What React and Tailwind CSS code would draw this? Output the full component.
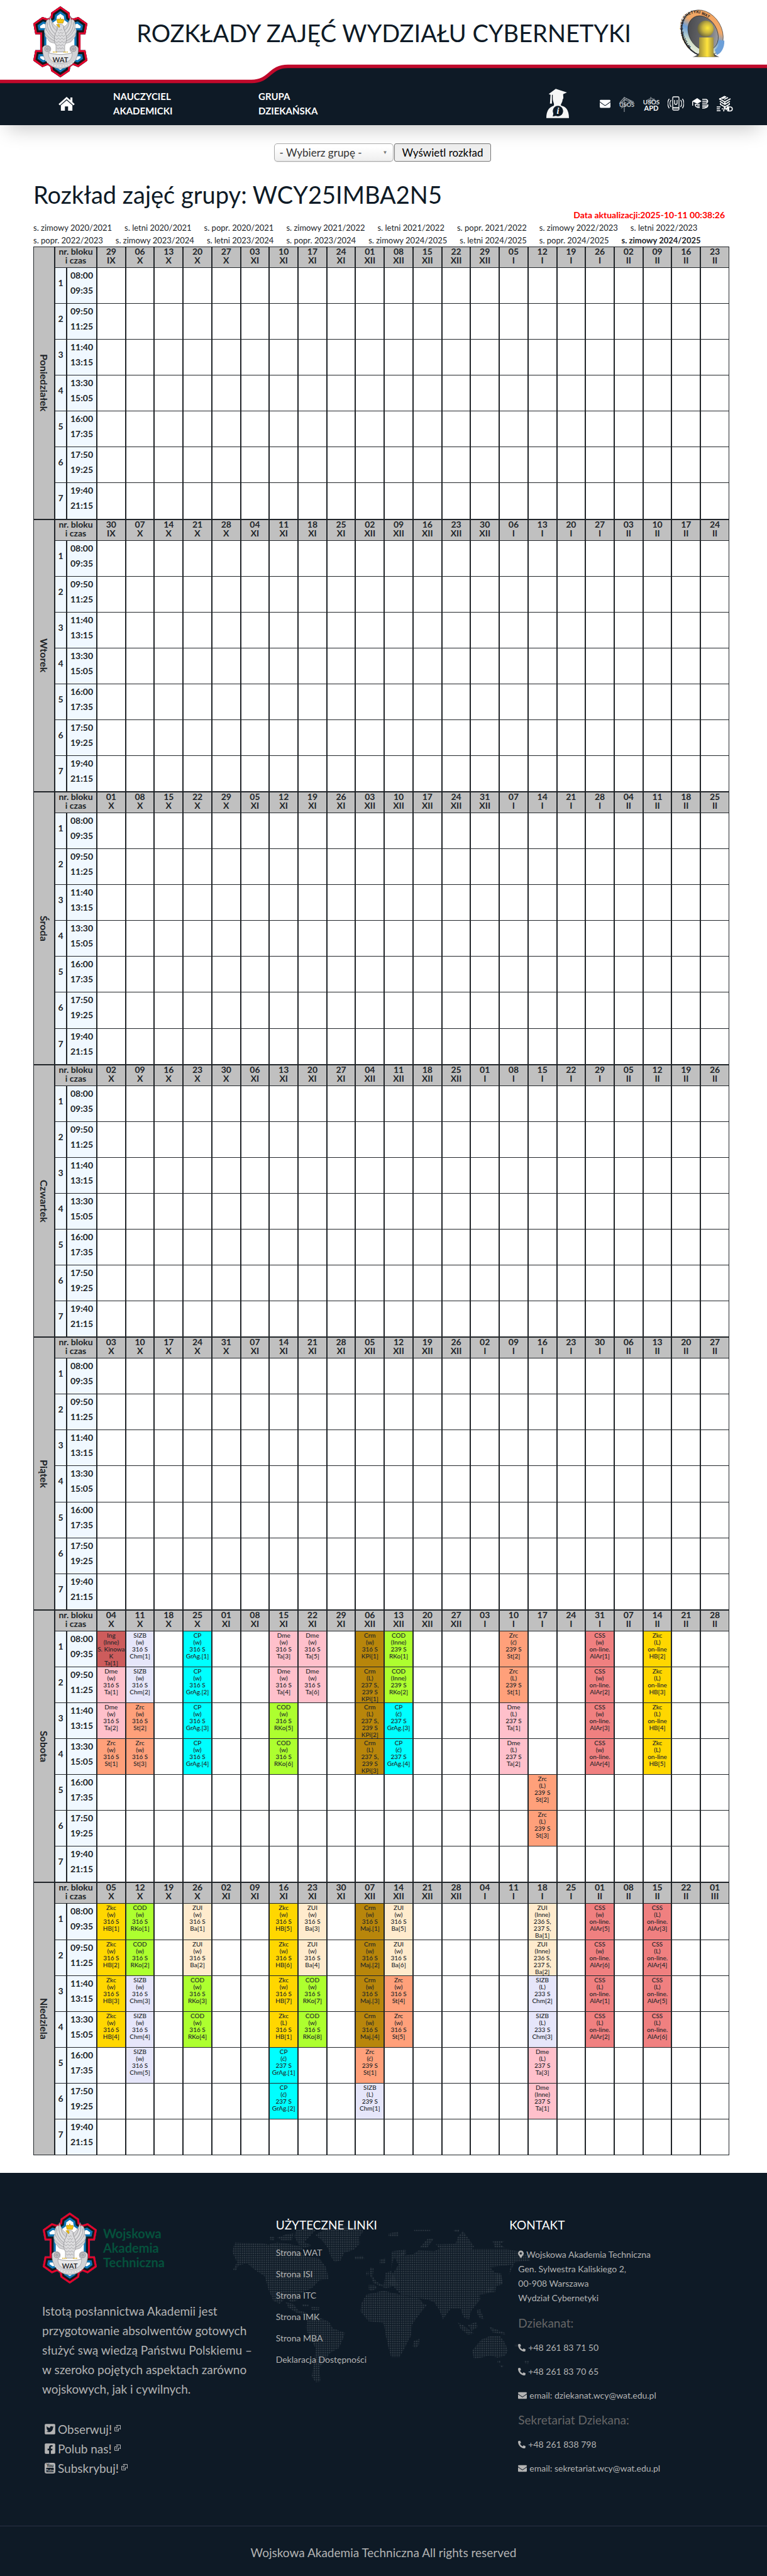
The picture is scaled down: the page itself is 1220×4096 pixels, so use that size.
import React from "react";
import { FaEnvelope, FaFacebookSquare, FaMapMarkerAlt, FaPhoneAlt, FaTwitterSquare } from "react-icons/fa";

const COLORS = {
  Ing: "bg-[#cd5c5c]",
  SIZB: "bg-[#e6e6fa]",
  CP: "bg-[#00ffff]",
  Dme: "bg-[#ffc0cb]",
  Crm: "bg-[#b8860b]",
  COD: "bg-[#adff2f]",
  Zrc: "bg-[#ffa07a]",
  CSS: "bg-[#f08080]",
  Zkc: "bg-[#ffd700]",
  ZUI: "bg-[#ffebcd]",
};

const BLOCKS = [
  ["08:00", "09:35"],
  ["09:50", "11:25"],
  ["11:40", "13:15"],
  ["13:30", "15:05"],
  ["16:00", "17:35"],
  ["17:50", "19:25"],
  ["19:40", "21:15"],
];

const DAYS = ["Poniedziałek", "Wtorek", "Środa", "Czwartek", "Piątek", "Sobota", "Niedziela"];
const ROMAN = ["I", "II", "III", "IV", "V", "VI", "VII", "VIII", "IX", "X", "XI", "XII"];
const WEEKS = Array.from({ length: 22 }, (_, i) => i);

// Lessons by day, then by block; the key of each lesson is its week column.
const LESSONS = {
  5: [
    {
      0: "Ing|(Inne)|S. Kinowa|K|Ta[1]", 1: "SIZB|(w)|316 S|Chm[1]", 3: "CP|(w)|316 S|GrAg.[1]",
      6: "Dme|(w)|316 S|Ta[3]", 7: "Dme|(w)|316 S|Ta[5]", 9: "Crm|(w)|316 S|KPi[1]",
      10: "COD|(Inne)|239 S|RKo[1]", 14: "Zrc|(ć)|239 S|St[2]", 17: "CSS|(w)|on-line.|AlAr[1]", 19: "Zkc|(L)|on-line|HB[2]",
    },
    {
      0: "Dme|(w)|316 S|Ta[1]", 1: "SIZB|(w)|316 S|Chm[2]", 3: "CP|(w)|316 S|GrAg.[2]",
      6: "Dme|(w)|316 S|Ta[4]", 7: "Dme|(w)|316 S|Ta[6]", 9: "Crm|(L)|237 S,|239 S|KPi[1]",
      10: "COD|(Inne)|239 S|RKo[2]", 14: "Zrc|(L)|239 S|St[1]", 17: "CSS|(w)|on-line.|AlAr[2]", 19: "Zkc|(L)|on-line|HB[3]",
    },
    {
      0: "Dme|(w)|316 S|Ta[2]", 1: "Zrc|(w)|316 S|St[2]", 3: "CP|(w)|316 S|GrAg.[3]",
      6: "COD|(w)|316 S|RKo[5]", 9: "Crm|(L)|237 S,|239 S|KPi[2]",
      10: "CP|(ć)|237 S|GrAg.[3]", 14: "Dme|(L)|237 S|Ta[1]", 17: "CSS|(w)|on-line.|AlAr[3]", 19: "Zkc|(L)|on-line|HB[4]",
    },
    {
      0: "Zrc|(w)|316 S|St[1]", 1: "Zrc|(w)|316 S|St[3]", 3: "CP|(w)|316 S|GrAg.[4]",
      6: "COD|(w)|316 S|RKo[6]", 9: "Crm|(L)|237 S,|239 S|KPi[3]",
      10: "CP|(ć)|237 S|GrAg.[4]", 14: "Dme|(L)|237 S|Ta[2]", 17: "CSS|(w)|on-line.|AlAr[4]", 19: "Zkc|(L)|on-line|HB[5]",
    },
    { 15: "Zrc|(L)|239 S|St[2]" },
    { 15: "Zrc|(L)|239 S|St[3]" },
    {},
  ],
  6: [
    {
      0: "Zkc|(w)|316 S|HB[1]", 1: "COD|(w)|316 S|RKo[1]", 3: "ZUI|(w)|316 S|Ba[1]",
      6: "Zkc|(w)|316 S|HB[5]", 7: "ZUI|(w)|316 S|Ba[3]", 9: "Crm|(w)|316 S|Maj.[1]",
      10: "ZUI|(w)|316 S|Ba[5]", 15: "ZUI|(Inne)|236 S,|237 S,|Ba[1]", 17: "CSS|(w)|on-line.|AlAr[5]", 19: "CSS|(L)|on-line.|AlAr[3]",
    },
    {
      0: "Zkc|(w)|316 S|HB[2]", 1: "COD|(w)|316 S|RKo[2]", 3: "ZUI|(w)|316 S|Ba[2]",
      6: "Zkc|(w)|316 S|HB[6]", 7: "ZUI|(w)|316 S|Ba[4]", 9: "Crm|(w)|316 S|Maj.[2]",
      10: "ZUI|(w)|316 S|Ba[6]", 15: "ZUI|(Inne)|236 S,|237 S,|Ba[2]", 17: "CSS|(w)|on-line.|AlAr[6]", 19: "CSS|(L)|on-line.|AlAr[4]",
    },
    {
      0: "Zkc|(w)|316 S|HB[3]", 1: "SIZB|(w)|316 S|Chm[3]", 3: "COD|(w)|316 S|RKo[3]",
      6: "Zkc|(w)|316 S|HB[7]", 7: "COD|(w)|316 S|RKo[7]", 9: "Crm|(w)|316 S|Maj.[3]",
      10: "Zrc|(w)|316 S|St[4]", 15: "SIZB|(L)|233 S|Chm[2]", 17: "CSS|(L)|on-line.|AlAr[1]", 19: "CSS|(L)|on-line.|AlAr[5]",
    },
    {
      0: "Zkc|(w)|316 S|HB[4]", 1: "SIZB|(w)|316 S|Chm[4]", 3: "COD|(w)|316 S|RKo[4]",
      6: "Zkc|(L)|316 S|HB[1]", 7: "COD|(w)|316 S|RKo[8]", 9: "Crm|(w)|316 S|Maj.[4]",
      10: "Zrc|(w)|316 S|St[5]", 15: "SIZB|(L)|233 S|Chm[3]", 17: "CSS|(L)|on-line.|AlAr[2]", 19: "CSS|(L)|on-line.|AlAr[6]",
    },
    { 1: "SIZB|(w)|316 S|Chm[5]", 6: "CP|(ć)|237 S|GrAg.[1]", 9: "Zrc|(ć)|239 S|St[1]", 15: "Dme|(L)|237 S|Ta[3]" },
    { 6: "CP|(ć)|237 S|GrAg.[2]", 9: "SIZB|(L)|239 S|Chm[1]", 15: "Dme|(Inne)|237 S|Ta[1]" },
    {},
  ],
};

const SEMESTERS = [
  ["s. zimowy 2020/2021", "s. letni 2020/2021", "s. popr. 2020/2021", "s. zimowy 2021/2022", "s. letni 2021/2022", "s. popr. 2021/2022", "s. zimowy 2022/2023", "s. letni 2022/2023"],
  ["s. popr. 2022/2023", "s. zimowy 2023/2024", "s. letni 2023/2024", "s. popr. 2023/2024", "s. zimowy 2024/2025", "s. letni 2024/2025", "s. popr. 2024/2025", "s. zimowy 2024/2025"],
];

function dateOf(day, week) {
  const d = new Date(Date.UTC(2025, 8, 29 + day + week * 7));
  return [String(d.getUTCDate()).padStart(2, "0"), ROMAN[d.getUTCMonth()]];
}

const BADGE =
  "184,15 230,47 233,68 247,78 275,69 321,102 311,157 286,157 286,237 311,237 321,290 275,323 247,312 234,322 231,343 184,375 137,343 134,322 121,312 93,323 47,290 57,237 82,237 82,157 57,157 47,102 93,69 121,78 135,68 138,47";

function WatCrest({ id, className }) {
  const wing = (
    <g>
      <path d="M166 118 C150 112 140 92 131 66 C130 84 131 92 127 82 C122 76 119 90 117 84 C108 98 108 112 110 122 C101 132 102 146 107 154 C104 168 114 178 122 182 C124 192 134 198 146 200 L172 204 Z" fill="#d4d4d6" stroke="#87878b" strokeWidth="2" />
      <path d="M128 88 C130 120 140 142 162 158 M117 96 C118 130 134 156 160 172 M110 124 C116 148 134 168 158 182 M108 156 C122 172 138 184 158 192 M140 96 C142 114 150 128 164 138" fill="none" stroke="#98989c" strokeWidth="2.5" />
      <path d="M122 110 C128 136 142 152 160 165 M112 140 C124 162 140 176 160 187 M134 100 C136 122 148 138 163 148" fill="none" stroke="#fff" strokeWidth="2" />
    </g>
  );
  return (
    <svg viewBox="44 12 280 366" className={className} role="img" aria-label="WAT">
      <clipPath id={id}><polygon points={BADGE} /></clipPath>
      <g clipPath={`url(#${id})`} strokeLinejoin="miter">
        <polygon points={BADGE} fill="#fff" stroke="#0c74b4" strokeWidth="62" />
        <polygon points={BADGE} fill="none" stroke="#15181c" strokeWidth="40" />
        <polygon points={BADGE} fill="none" stroke="#e4042c" strokeWidth="20" />
      </g>
      {wing}
      <g transform="translate(368 0) scale(-1 1)">{wing}</g>
      <path d="M170 112 C172 104 196 104 200 114 C200 128 204 136 210 150 C218 176 216 196 206 214 L206 246 L162 246 L162 214 C150 194 152 170 160 150 C168 136 172 128 170 112Z" fill="#dcdcde" stroke="#7c7c80" strokeWidth="2" />
      <path d="M160 160 l8 8 8-8 8 8 8-8 8 8 8-8 M156 176 l9 8 9-8 9 8 9-8 9 8 9-8 M158 192 l8 8 9-8 9 8 9-8 9 8 8-8 M162 208 l8 8 8-8 8 8 8-8 8 8 M166 224 l7 8 7-8 7 8 7-8 7 8 M172 146 l7 7 7-7 7 7 7-7 M176 132 l6 6 6-6 6 6" fill="none" stroke="#88888c" strokeWidth="2" />
      <path d="M176 104 L163 108 L172 116 L178 124 L182 116 Z" fill="#e8b80c" stroke="#8a6a08" strokeWidth="1" />
      <path d="M170 100 L166 82 C172 76 178 80 178 84 C178 76 190 76 190 84 C192 78 202 78 202 86 L197 101 Z" fill="#f2c412" stroke="#a37a08" strokeWidth="2" />
      <circle cx="184" cy="75" r="3.5" fill="#e8b80c" />
      <path d="M94 232 C90 214 118 206 132 220 C140 232 134 246 124 250 C150 262 220 262 244 250 C234 246 228 232 236 220 C250 206 280 214 275 238 C274 278 246 330 184 330 C126 330 92 278 94 232Z" fill="#d2d2d5" stroke="#77777b" strokeWidth="2" />
      <path d="M124 250 C150 262 220 262 244 250 C246 284 226 302 184 303 C144 302 122 284 124 250Z" fill="#e9e9eb" stroke="#8e8e92" strokeWidth="2" />
      <path d="M108 286 C124 308 150 317 184 318 C220 317 244 308 260 286" fill="none" stroke="#f5f5f5" strokeWidth="5" strokeDasharray="5 9" />
      <g fill="#c2c2c5" stroke="#808084" strokeWidth="2.5">
        <circle cx="118" cy="231" r="13" /><circle cx="250" cy="231" r="13" />
        <circle cx="118" cy="231" r="5" /><circle cx="250" cy="231" r="5" />
      </g>
      <path d="M146 247 h22 M200 247 h22" stroke="#d5a60c" strokeWidth="5" strokeDasharray="5 3" />
      <text x="184" y="298" textAnchor="middle" fontSize="36" className="fill-[#333336] font-['Lato',sans-serif] font-bold">WAT</text>
    </svg>
  );
}

function FacultyLogo({ className }) {
  return (
    <svg viewBox="76 8 230 248" className={className} role="img" aria-label="Wydział Cybernetyki WAT">
      <defs>
        <linearGradient id="ring" x1="0.1" y1="0.9" x2="0.9" y2="0.2">
          <stop offset="0" stopColor="#f0f4e4" /><stop offset="0.25" stopColor="#cfdcc8" />
          <stop offset="0.5" stopColor="#6c9fd8" /><stop offset="0.7" stopColor="#f0a868" /><stop offset="1" stopColor="#f4a460" />
        </linearGradient>
        <linearGradient id="disc" x1="0" y1="0" x2="1" y2="1">
          <stop offset="0" stopColor="#3f4044" /><stop offset="0.6" stopColor="#6d6e72" /><stop offset="1" stopColor="#b9babd" />
        </linearGradient>
        <linearGradient id="column">
          <stop offset="0" stopColor="#8c7d3c" /><stop offset="0.55" stopColor="#ffe43c" /><stop offset="1" stopColor="#84763c" />
        </linearGradient>
        <radialGradient id="ball" cx="0.62" cy="0.45" r="0.6">
          <stop offset="0" stopColor="#ffe838" /><stop offset="0.5" stopColor="#c8b440" /><stop offset="1" stopColor="#6b663f" />
        </radialGradient>
        <path id="ringText" d="M134 203 C84 150 78 70 122 42 C178 8 262 72 278 150 C284 180 280 204 268 222" />
      </defs>
      <g transform="rotate(-30 191 132)">
        <ellipse cx="187" cy="132" rx="99" ry="122" fill="#1e2227" />
        <ellipse cx="191" cy="132" rx="97" ry="121" fill="url(#ring)" stroke="#33363b" strokeWidth="2" />
        <ellipse cx="193" cy="134" rx="70" ry="92" fill="url(#disc)" stroke="#222" strokeWidth="2" />
      </g>
      <path d="M300 170 C302 208 282 236 262 242 L252 216 C266 206 276 190 274 168Z" fill="#6c9fd8" />
      <text fontSize="20" className="fill-[#1b1b1d] font-['Liberation_Sans',sans-serif] font-bold">
        <textPath href="#ringText">WYDZIAŁ CYBERNETYKI WAT</textPath>
      </text>
      <path d="M140 252 C158 248 172 240 176 226 H244 C248 240 262 248 276 252Z" fill="#4a4a48" />
      <path d="M174 154 H246 V230 C247 244 252 250 256 252 H164 C170 248 174 240 174 230Z" fill="url(#column)" />
      <circle cx="206" cy="111" r="41" fill="url(#ball)" />
    </svg>
  );
}

function HomeIcon() {
  return (
    <svg viewBox="0 0 28 24" className="h-[22px] w-[26px] fill-white">
      <path d="M14 0 L0 12.5 L2.2 14.6 L14 4.2 L25.8 14.6 L28 12.5 L24 9 V1 H20.5 V5.8 Z" />
      <path d="M14 6 L4 14.8 V24 H11 V16.5 H16.5 V24 H24 V14.8 Z" />
    </svg>
  );
}

function StudentIcon() {
  return (
    <svg viewBox="0 0 113 146" className="h-[47px] w-9">
      <path d="M47 0 L103 18 L84 27 C84 44 88 46 81 54 C81 70 69 76 74 84 C96 88 113 104 113 146 H0 C0 112 12 92 37 84 C42 76 32 62 32 50 V30 L28 30 V74 H18 L21 30 L12 26 Z" fill="#f5f6f6" />
      <circle cx="58" cy="111" r="26" fill="#0e1a26" />
      <path d="M32 138 L36 120 L50 134Z" fill="#0e1a26" />
      <text x="58" y="125" textAnchor="middle" fontSize="44" className="fill-white font-['Liberation_Serif',serif] font-bold italic">i</text>
    </svg>
  );
}

function UsosIcon() {
  return (
    <svg viewBox="0 0 26 26" className="h-[26px] w-[26px]">
      <g fill="none" stroke="#8f969c" strokeWidth="1.2">
        <path d="M2 11 L9 3 L24 10 M4 13 L9 6 L22 12 M9 2 V26 M1 13 L13 5 L25 13 M4 20 L20 9" />
      </g>
      <text x="13" y="18" textAnchor="middle" fontSize="9" className="fill-[#c5c9cc] font-['Lato',sans-serif]">USOS</text>
    </svg>
  );
}

function ApdIcon() {
  return (
    <svg viewBox="0 0 26 26" className="h-[26px] w-[26px]">
      <path d="M5 8 L13 4 L20 8 M12 2 V12 M7 12 L18 5" fill="none" stroke="#7c848b" strokeWidth="1.2" />
      <text x="13" y="14" textAnchor="middle" fontSize="10" className="fill-[#e4e6e8] font-['Lato',sans-serif]">USOS</text>
      <text x="13" y="24" textAnchor="middle" fontSize="11" className="fill-white font-['Lato',sans-serif]">APD</text>
    </svg>
  );
}

function PhoneAppIcon() {
  return (
    <svg viewBox="0 0 26 26" className="h-[26px] w-[26px]" fill="none" stroke="#fff" strokeWidth="1.3">
      <rect x="8" y="2" width="10" height="21" rx="1.5" />
      <path d="M8 19.5 H18" strokeWidth="2" />
      <path d="M11 7 V12 A2 2 0 0 0 15 12 V7" />
      <path d="M5.5 7 A9 9 0 0 0 5.5 18 M2.5 5 A13 13 0 0 0 2.5 20 M20.5 7 A9 9 0 0 1 20.5 18 M23.5 5 A13 13 0 0 1 23.5 20" />
    </svg>
  );
}

function LearningIcon() {
  return (
    <svg viewBox="0 0 26 26" className="h-[26px] w-[26px]">
      <path d="M0 9 L8 4 L15 9 L8 13 Z M0 9 V16 H1.5 V10Z" fill="#fff" />
      <path d="M12 14 H5 C5 18 7 19 12 19 M8 16.5 H12 M16 6 H22 C25.500 7 25.500 11 22 12 M16 9 H24 M16 12 H24 M16 15 H25 C25 19 22 20 16 20 M16 17.500 H24" fill="none" stroke="#fff" strokeWidth="1.6" />
    </svg>
  );
}

function EmdIcon() {
  return (
    <svg viewBox="0 0 26 26" className="h-[26px] w-[26px]" fill="none" stroke="#fff">
      <path d="M4 5 L13 10 L22 5 M13 1 L4 6 M15 1.500 L9 5 M18 3 L12 6 M5 9 L13 14 L21 9 M13 14 V10 M6 12 V14 L13 18 L20 14 V12" strokeWidth="1.8" />
      <path d="M0 18 H6 M0 21 H5 M0 24 H6 M8 21 H10 M11 25 L12.500 18 L15 22 L17.500 18 V25 M19 18 H21 C26 18 26 24.500 21 24.500 H19 Z" strokeWidth="1.7" />
    </svg>
  );
}

function YoutubeSquare() {
  return (
    <svg viewBox="0 0 18 18" className="h-[17px] w-[17px]">
      <rect width="18" height="18" rx="3.500" fill="currentColor" />
      <text x="9" y="7.500" textAnchor="middle" fontSize="7" className="fill-[#0e1a26] font-['Lato',sans-serif] font-bold">You</text>
      <rect x="2.500" y="8.500" width="13" height="7.500" rx="1.500" fill="#0e1a26" />
      <text x="9" y="14.800" textAnchor="middle" fontSize="6.500" className="fill-[#b3b3b3] font-['Lato',sans-serif] font-bold">Tube</text>
    </svg>
  );
}

function ExternalMark() {
  return (
    <svg viewBox="0 0 10 10" className="mb-1 h-[10px] w-[10px]" fill="none" stroke="currentColor" strokeWidth="1">
      <path d="M4 3.500 H0.500 V9.500 H6.500 V6 M3 0.500 H9.500 V7 L7.500 5 L4.500 8 L2.500 6 L5.500 3 Z" />
    </svg>
  );
}

const LAND = [
  "960,284 1075,288 1130,300 1220,318 1250,340 1300,345 1328,380 1338,425 1300,430 1270,460 1225,480 1215,505 1190,515 1165,500 1140,520 1115,510 1095,465 1080,415 1040,390 1010,365 975,372 962,394 952,390 968,360 948,320",
  "1100,262 1120,262 1118,276 1100,274", "1130,266 1165,254 1196,248 1190,275 1150,276", "1095,292 1130,284 1180,290 1230,300 1240,315 1180,310 1110,302",
  "1205,236 1250,228 1285,236 1260,262 1240,282 1270,296 1240,305 1215,290 1200,262",
  "1285,256 1310,240 1380,222 1450,226 1480,240 1462,262 1464,290 1440,312 1400,325 1385,355 1362,360 1345,335 1335,305 1310,275",
  "1440,338 1480,336 1482,350 1446,350",
  "1165,515 1195,520 1215,545 1250,555 1245,565 1210,555 1175,535", "1230,522 1258,524 1254,532 1232,530", "1268,532 1300,534 1298,545 1270,544",
  "1255,572 1290,568 1340,590 1355,615 1404,632 1398,650 1380,690 1340,712 1325,740 1300,765 1306,820 1285,822 1270,800 1280,740 1285,690 1260,650 1246,610",
  "1500,448 1525,448 1535,460 1510,472 1500,465", "1504,380 1520,382 1516,415 1530,435 1560,450 1568,400 1590,395 1590,320 1648,310 1650,330 1600,345 1590,390 1620,450 1568,460 1520,442 1505,410", "1490,398 1500,396 1500,412 1490,412",
  "1545,350 1568,344 1568,365 1545,368",
  "1490,485 1560,470 1640,488 1705,500 1720,520 1735,525 1705,560 1675,600 1672,640 1645,690 1625,725 1590,725 1580,690 1568,640 1560,595 1500,588 1466,550 1470,520",
  "1705,655 1702,680 1690,692 1678,685 1680,665",
  "1605,345 1650,312 1645,335 1680,330 1700,315 1765,318 1780,310 2060,310 2110,320 2150,335 2150,355 2090,360 2065,410 2075,370 1990,380 2010,400 2035,405 2040,445 2010,455 1985,480 1948,485 1950,505 1915,545 1905,580 1885,575 1870,540 1830,540 1800,580 1785,545 1765,515 1740,505 1710,500 1630,485 1600,455 1580,440 1600,400 1620,370",
  "1770,292 1850,290 1860,262 1880,240 1900,265 1925,300 1915,312 1790,312", "1710,300 1740,268 1765,268 1735,305 1710,305", "1580,250 1620,242 1620,262 1580,262", "1683,234 1748,234 1748,240 1683,240", "1845,234 1868,234 1862,245 1845,242", "2000,278 2050,278 2030,290 2050,305 2010,306",
  "2015,405 2035,405 2040,445 2015,440", "1978,460 2015,455 2010,475 1980,478",
  "1860,592 1885,605 1925,635 1900,640 1870,615", "1900,602 1935,590 1940,610 1915,625", "1935,545 1950,542 1965,580 1945,575", "1985,608 2050,632 2052,640 2000,630",
  "1955,658 1990,645 2030,645 2050,670 2062,700 2050,722 2020,728 1990,720 1925,734 1918,700",
  "2020,738 2032,738 2032,750 2020,748", "2026,756 2046,756 2040,768", "2128,738 2148,740 2144,752 2128,750", "2090,676 2108,676 2108,684 2090,684",
];

function WorldMap() {
  return (
    <svg viewBox="940 215 1270 615" preserveAspectRatio="none" aria-hidden="true" className="pointer-events-none absolute top-[82px] left-[30%] h-[254px] w-[41%]">
      <defs>
        <pattern id="dots" width="8.800" height="8.700" patternUnits="userSpaceOnUse">
          <rect x="1.500" y="1.500" width="5.500" height="5.500" rx="2" fill="#343f49" />
        </pattern>
      </defs>
      {LAND.map((p) => <polygon key={p} points={p} fill="url(#dots)" />)}
    </svg>
  );
}

function DayRows({ name, day }) {
  return (
    <tbody>
      <tr className="h-[34px] leading-[14px]">
        <th scope="rowgroup" rowSpan={8} className="border border-[#212529] bg-[#c0c0c0] p-0 align-middle">
          <div className="flex justify-center">
            <span className="text-[16px] leading-5 [writing-mode:vertical-rl]">{name}</span>
          </div>
        </th>
        <th colSpan={2} className="border border-[#212529] bg-[#c0c0c0] p-0 align-top">nr. bloku<br />i czas</th>
        {WEEKS.map((w) => {
          const [d, m] = dateOf(day, w);
          return <th key={w} className="border border-[#212529] bg-[#c0c0c0] p-0 align-top">{d}<br />{m}</th>;
        })}
      </tr>
      {BLOCKS.map(([from, to], b) => (
        <tr key={from} className="h-[57px]">
          <th scope="row" className="border-x border-b border-[#212529] bg-[#f0f8ff] p-0 align-top leading-[48px]">{b + 1}</th>
          <th scope="row" className="border-x border-b border-[#212529] bg-[#f0f8ff] p-0 align-top leading-6">{from}<br />{to}</th>
          {WEEKS.map((w) => {
            const text = LESSONS[day]?.[b]?.[w];
            const lines = text ? text.split("|") : [];
            return (
              <td key={w} className={`border-x border-b border-[#212529] p-0 align-top ${text ? COLORS[lines[0]] : ""}`}>
                {text && (
                  <div className="flex flex-col items-center pt-px text-[10px] leading-[11px] font-medium whitespace-nowrap">
                    {lines.map((l, i) => <span key={i}>{l}</span>)}
                  </div>
                )}
              </td>
            );
          })}
        </tr>
      ))}
    </tbody>
  );
}

function Header() {
  return (
    <header className="relative shadow-[0_18px_30px_-12px_rgba(0,0,0,0.22)]">
      <svg viewBox="0 0 1220 97" preserveAspectRatio="none" aria-hidden="true" className="absolute inset-x-0 bottom-0 h-[97px] w-full">
        <path d="M0 27.500 H400 C430 27.500 428 2.500 458 2.500 H1220 V97 H0Z" fill="#0e1a26" />
        <path d="M0 27.500 H400 C430 27.500 428 3.500 458 3.500 H1220" fill="none" stroke="#c0092b" strokeWidth="5.500" />
      </svg>
      <div className="relative flex items-start justify-between pt-[9px] pr-[66px] pl-[52px]">
        <WatCrest id="crestTop" className="h-[115px] w-[88px]" />
        <h1 className="pt-[19px] text-[38px] leading-[48px] text-[#0e1a26]">ROZKŁADY ZAJĘĆ WYDZIAŁU CYBERNETYKI</h1>
        <FacultyLogo className="mt-[4px] h-[79px] w-[73px]" />
      </div>
      <nav className="relative flex items-center pt-[17px] pr-[54px] pb-[11px] pl-[93px] text-[15px] leading-[23px] font-bold text-white">
        <a href="#home" aria-label="Strona główna" className="mr-[61px]"><HomeIcon /></a>
        <a href="#nauczyciel" className="w-[231px]">NAUCZYCIEL<br />AKADEMICKI</a>
        <a href="#grupa">GRUPA<br />DZIEKAŃSKA</a>
        <div className="ml-auto flex items-center gap-[13px]">
          <a href="#student" aria-label="Informacje dla studenta" className="mr-9"><StudentIcon /></a>
          <a href="#poczta" aria-label="Poczta"><FaEnvelope className="h-[18px] w-[17px]" /></a>
          <a href="#usos" aria-label="USOS"><UsosIcon /></a>
          <a href="#apd" aria-label="USOS APD"><ApdIcon /></a>
          <a href="#mobilny" aria-label="Mobilny USOS"><PhoneAppIcon /></a>
          <a href="#elearning" aria-label="E-learning"><LearningIcon /></a>
          <a href="#emd" aria-label="E-MD"><EmdIcon /></a>
        </div>
      </nav>
    </header>
  );
}

function Footer() {
  const social = [
    [<FaTwitterSquare className="h-[19px] w-[17px]" />, "Obserwuj!"],
    [<FaFacebookSquare className="h-[19px] w-[17px]" />, "Polub nas!"],
    [<YoutubeSquare />, "Subskrybuj!"],
  ];
  return (
    <footer className="relative bg-[#0e1a26] text-[#b3b3b3]">
      <WorldMap />
      <div className="relative grid grid-cols-3 pt-[62px] pr-[38px] pb-[76px] pl-[67px]">
        <div>
          <div className="flex items-center gap-[9px]">
            <WatCrest id="crestBottom" className="h-[115px] w-[88px]" />
            <p className="text-[20px] leading-[23px] font-bold text-[#05513c]">Wojskowa<br />Akademia<br />Techniczna</p>
          </div>
          <p className="mt-[27px] pr-8 text-[19px] leading-[31px]">
            Istotą posłannictwa Akademii jest przygotowanie absolwentów gotowych służyć swą wiedzą Państwu Polskiemu – w szeroko pojętych aspektach zarówno wojskowych, jak i cywilnych.
          </p>
          <ul className="mt-[34px] pl-1 text-[19px] leading-[29px]">
            {social.map(([icon, label]) => (
              <li key={label}>
                <a href="#social" className="inline-flex items-center gap-1">{icon}<span>{label}</span><ExternalMark /></a>
              </li>
            ))}
          </ul>
        </div>
        <div className="pt-[6px]">
          <h2 className="text-[19px] leading-[30px] text-white">UŻYTECZNE LINKI</h2>
          <ul className="mt-3 text-[14px] leading-[34px]">
            {["Strona WAT", "Strona ISI", "Strona ITC", "Strona IMK", "Strona MBA", "Deklaracja Dostępności"].map((l) => (
              <li key={l}><a href="#link">{l}</a></li>
            ))}
          </ul>
        </div>
        <div className="pt-[6px] text-[14px]">
          <h2 className="text-[19px] leading-[30px] text-white">KONTAKT</h2>
          <div className="pl-[14px]">
            <address className="mt-5 leading-[23px] not-italic">
              <FaMapMarkerAlt className="mr-1 inline h-[13px] w-[9px] align-[-1px]" />Wojskowa Akademia Techniczna<br />
              Gen. Sylwestra Kaliskiego 2,<br />00-908 Warszawa<br />Wydział Cybernetyki
            </address>
            <h3 className="mt-[14px] text-[19px] leading-[30px] text-[#666]">Dziekanat:</h3>
            <p className="mt-3 flex items-center gap-1 leading-6"><FaPhoneAlt className="h-3 w-3" />+48 261 83 71 50</p>
            <p className="mt-[14px] flex items-center gap-1 leading-6"><FaPhoneAlt className="h-3 w-3" />+48 261 83 70 65</p>
            <p className="mt-[14px] flex items-center gap-1 leading-6"><FaEnvelope className="h-[14px] w-[14px]" />email: dziekanat.wcy@wat.edu.pl</p>
            <h3 className="mt-3 text-[19px] leading-[30px] text-[#666]">Sekretariat Dziekana:</h3>
            <p className="mt-3 flex items-center gap-1 leading-6"><FaPhoneAlt className="h-3 w-3" />+48 261 838 798</p>
            <p className="mt-[14px] flex items-center gap-1 leading-6"><FaEnvelope className="h-[14px] w-[14px]" />email: sekretariat.wcy@wat.edu.pl</p>
          </div>
        </div>
      </div>
      <p className="relative border-t border-[#2b3045] pt-[27px] pb-[26px] text-center text-[19px] leading-[30px]">Wojskowa Akademia Techniczna All rights reserved</p>
    </footer>
  );
}

export default function App() {
  return (
    <div className="bg-white font-['Lato',sans-serif] text-[#212529]">
      <Header />
      <main className="pt-[29px] pr-[60px] pb-[28px] pl-[53px]">
        <form className="ml-1 flex justify-center text-[17px]" onSubmit={(e) => e.preventDefault()}>
          <div className="relative">
            <select aria-label="Grupa" className="h-[29px] w-[190px] appearance-none rounded-[5px] border border-[#aaa] bg-linear-to-b from-white from-20% to-[#eee] pl-2 text-[#333] shadow-[0_1px_1px_rgba(0,0,0,0.1)]">
              <option>- Wybierz grupę -</option>
            </select>
            <span aria-hidden="true" className="pointer-events-none absolute top-[10px] right-[9px] text-[8px] leading-none text-[#777]">▼</span>
          </div>
          <button type="submit" className="ml-px h-[29px] rounded-[3px] border border-[#767676] bg-[#efefef] px-3 leading-[27px] text-black">Wyświetl rozkład</button>
        </form>
        <h2 className="mt-[29px] text-[38px] leading-[46px] text-[#0e1a26]">Rozkład zajęć grupy: WCY25IMBA2N5</h2>
        <p className="pr-[7px] text-right text-[14px] leading-5 font-bold text-[#ff0000]">Data aktualizacji:2025-10-11 00:38:26</p>
        <div className="text-[13px] leading-5 whitespace-nowrap">
          {SEMESTERS.map((row, r) => (
            <div key={r} className="flex gap-5">
              {row.map((s, i) => (
                <a key={i} href="#semestr" className={r === 1 && i === 7 ? "font-bold" : ""}>{s}</a>
              ))}
            </div>
          ))}
        </div>
        <table className="h-[3035px] w-full table-fixed border-separate border-spacing-0 text-center text-[14px]">
          <colgroup>
            <col className="w-[34px]" />
            <col className="w-[19px]" />
            <col className="w-[48px]" />
            {WEEKS.map((w) => <col key={w} />)}
          </colgroup>
          {DAYS.map((name, day) => <DayRows key={name} name={name} day={day} />)}
        </table>
      </main>
      <Footer />
    </div>
  );
}
